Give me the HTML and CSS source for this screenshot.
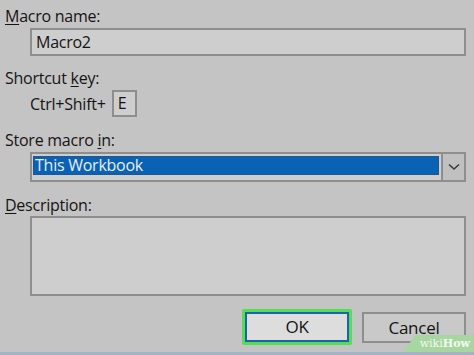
FILE: index.html
```html
<!DOCTYPE html>
<html>
<head>
<meta charset="utf-8">
<link rel="stylesheet" href="styles.css">
</head>
<body>
<div class="page">
  <div class="dialog">
    <div class="lbl lbl-first"><u>M</u>acro name:</div>
    <div class="field name-field">Macro2</div>
    <div class="lbl lbl-gap">Shortcut <u>k</u>ey:</div>
    <div class="shortcut">
      <span class="combo">Ctrl+Shift+</span>
      <span class="keybox">E</span>
    </div>
    <div class="lbl lbl-gap2">Store macro <u>i</u>n:</div>
    <div class="field select">
      <div class="sel-value"><span>This Workbook</span></div>
      <div class="sel-btn">
        <svg width="12" height="8" viewBox="0 0 12 8"><path d="M1 1.5 L6 6 L11 1.5" fill="none" stroke="#3a3a3a" stroke-width="1.6"/></svg>
      </div>
    </div>
    <div class="lbl lbl-gap2"><u>D</u>escription:</div>
    <div class="field desc"></div>
    <div class="buttons">
      <div class="btn-ok-ring"><div class="btn btn-ok">OK</div></div>
      <div class="btn btn-cancel">Cancel</div>
    </div>
  </div>
  <div class="strip"></div>
  <div class="wm"><span class="wm-wiki">wiki</span><span class="wm-how">How</span></div>
</div>
</body>
</html>
```

FILE: styles.css
```css
html, body {
  margin: 0;
  padding: 0;
}
body {
  background: #c4c4c4;
  font-family: "Open Sans", "Noto Sans", sans-serif;
  font-size: 16px;
  letter-spacing: -0.25px;
  color: #141414;
}
.page {
  position: relative;
  width: 474px;
  height: 355px;
  display: flex;
  flex-direction: column;
  overflow: hidden;
}
.dialog {
  flex: 1;
  display: flex;
  flex-direction: column;
  padding: 6px 8px 0 5px;
}
.lbl {
  height: 20px;
  line-height: 20px;
  white-space: nowrap;
}
.lbl u {
  text-decoration-thickness: 1px;
  text-underline-offset: 2px;
}
.lbl-gap { margin-top: 12px; }
.lbl-gap2 { margin-top: 13px; }
.field {
  margin-left: 25px;
  box-sizing: border-box;
  border: 2px solid #8e8e8e;
  background: #cecece;
}
.name-field {
  margin-top: 2px;
  height: 28px;
  line-height: 24px;
  padding-left: 4px;
}
.shortcut {
  margin-top: 2px;
  margin-left: 25px;
  display: flex;
  align-items: center;
  gap: 6px;
  height: 27px;
}
.keybox {
  box-sizing: border-box;
  width: 25px;
  height: 27px;
  border: 2px solid #8e8e8e;
  background: #cecece;
  line-height: 23px;
  padding-left: 4px;
}
.select {
  margin-top: 2px;
  height: 30px;
  display: flex;
  border-right: none;
  background: #cecece;
}
.sel-value {
  flex: 1;
  padding: 2px 2px 7px 1px;
}
.sel-value span {
  display: block;
  height: 19px;
  line-height: 19px;
  background: #0a62b5;
  color: #e8eef8;
  padding-left: 2px;
  outline: 1px dotted #3a4a6a;
  outline-offset: -1px;
}
.sel-btn {
  width: 25px;
  margin-top: -2px;
  margin-bottom: -2px;
  box-sizing: border-box;
  border: 2px solid #8e8e8e;
  background: #c0c0c0;
  display: flex;
  align-items: center;
  justify-content: center;
}
.desc {
  margin-top: 1px;
  height: 80px;
}
.buttons {
  margin-top: 13px;
  display: flex;
  justify-content: flex-end;
  align-items: center;
  gap: 10px;
  height: 36px;
}
.btn-ok-ring {
  box-sizing: border-box;
  width: 110px;
  height: 36px;
  border: 3px solid #52e052;
  border-radius: 2px;
}
.btn {
  box-sizing: border-box;
  text-align: center;
  font-size: 17px;
}
.btn-ok {
  width: 100%;
  height: 100%;
  border: 2px solid #1d5fb0;
  background: #dddddd;
  line-height: 26px;
}
.btn-cancel {
  width: 104px;
  height: 31px;
  border: 2px solid #8e8e8e;
  background: #c9c9c9;
  line-height: 27px;
}
.strip {
  height: 3px;
  background: #a3b3c6;
}
.wm {
  position: absolute;
  right: 0;
  bottom: 3px;
  width: 72px;
  height: 17px;
  background: #a7d6a0;
  clip-path: polygon(14px 0, 100% 0, 100% 100%, 0 100%);
  font-family: "DejaVu Serif", serif;
  font-weight: bold;
  font-size: 11px;
  letter-spacing: 0;
  line-height: 17px;
  text-align: right;
  padding-right: 4px;
  box-sizing: border-box;
  color: #f4f8f2;
}
.wm-wiki { font-weight: normal; }
```
